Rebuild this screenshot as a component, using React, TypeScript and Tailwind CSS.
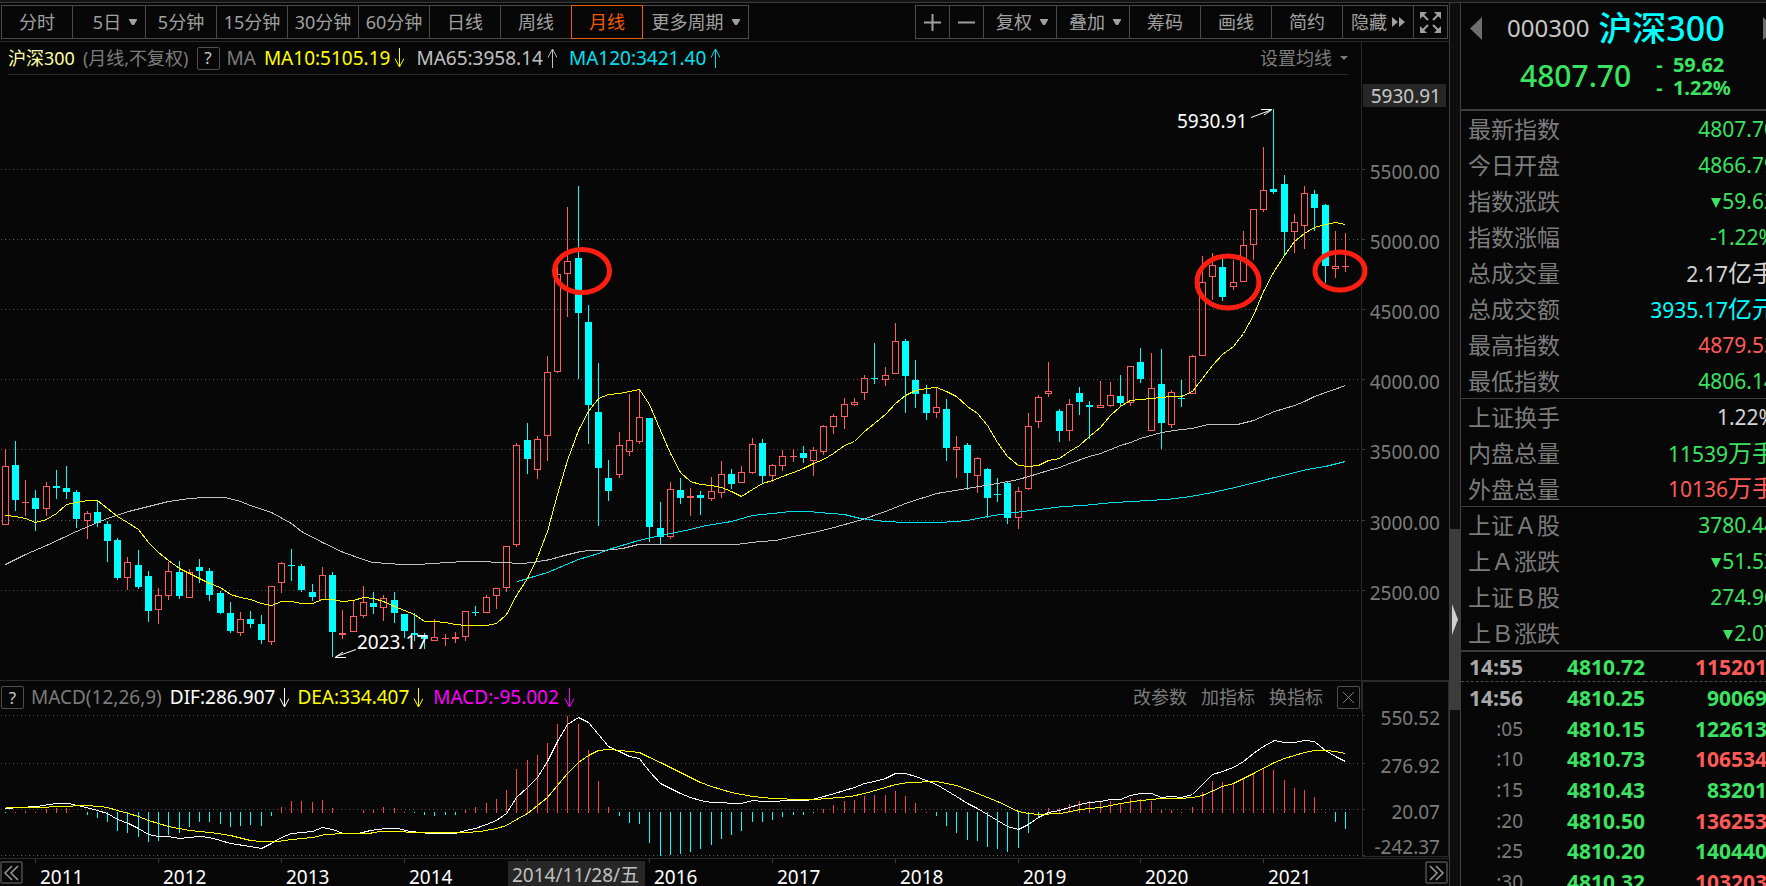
import React from 'react';
import clsx from 'clsx';

type Dir = 'u' | 'd';
type Candle = [Dir, number, number, number, number]; // direction, high, body top, body bottom, low

const RED = '#ff5c5c';
const CYAN = '#00ffff';
const FONT = '"Noto Sans", "Noto Sans CJK SC", sans-serif';

const candles: Candle[] = [
  ['u', 449, 466, 525, 525], ['d', 441, 465, 500, 511], ['u', 480, 502, 503, 516], ['d', 490, 498, 509, 531],
  ['u', 482, 486, 509, 516], ['d', 470, 486, 488, 499], ['d', 466, 488, 492, 499], ['d', 490, 492, 519, 528],
  ['u', 511, 513, 521, 539], ['d', 500, 512, 523, 527], ['d', 521, 524, 541, 562], ['d', 538, 540, 578, 580],
  ['u', 557, 562, 578, 590], ['d', 550, 565, 587, 589], ['d', 571, 576, 611, 622], ['u', 588, 595, 610, 624],
  ['u', 562, 571, 596, 600], ['d', 561, 572, 596, 599], ['u', 569, 572, 598, 598], ['d', 559, 567, 571, 583],
  ['d', 568, 571, 595, 601], ['d', 591, 593, 613, 614], ['d', 602, 613, 631, 633], ['u', 612, 619, 633, 636],
  ['d', 611, 619, 624, 628], ['d', 615, 624, 640, 644], ['u', 586, 586, 642, 645], ['u', 562, 563, 583, 593],
  ['d', 549, 565, 566, 581], ['d', 564, 566, 590, 592], ['d', 584, 592, 597, 601], ['u', 567, 575, 600, 600],
  ['d', 572, 575, 632, 657], ['u', 610, 633, 635, 639], ['u', 600, 616, 632, 632], ['u', 586, 602, 616, 618],
  ['d', 592, 603, 607, 614], ['u', 595, 598, 608, 621], ['d', 592, 600, 613, 623], ['d', 614, 614, 631, 638],
  ['d', 613, 633, 635, 641], ['d', 633, 635, 639, 649], ['u', 619, 637, 641, 641], ['u', 634, 638, 639, 646],
  ['u', 632, 637, 639, 643], ['u', 611, 611, 637, 641], ['d', 606, 612, 613, 616], ['u', 595, 597, 613, 613],
  ['u', 588, 588, 596, 609], ['u', 546, 546, 588, 592], ['u', 443, 445, 545, 547], ['d', 423, 440, 459, 474],
  ['u', 436, 439, 470, 479], ['u', 356, 372, 436, 461], ['u', 267, 274, 372, 373], ['u', 207, 261, 274, 317],
  ['d', 186, 258, 313, 379], ['d', 305, 322, 405, 444], ['d', 363, 412, 468, 526], ['d', 460, 478, 491, 501],
  ['u', 432, 445, 475, 478], ['u', 394, 440, 452, 456], ['u', 390, 417, 442, 444], ['d', 418, 418, 527, 542],
  ['d', 502, 528, 537, 544], ['u', 482, 489, 537, 539], ['d', 478, 490, 498, 504], ['u', 488, 496, 498, 516],
  ['d', 491, 495, 498, 515], ['u', 477, 491, 499, 501], ['u', 461, 474, 493, 498], ['d', 469, 474, 484, 489],
  ['u', 466, 472, 483, 483], ['u', 438, 444, 473, 474], ['d', 439, 443, 476, 483], ['u', 464, 465, 476, 482],
  ['u', 450, 456, 466, 471], ['u', 449, 456, 457, 462], ['d', 446, 453, 458, 463], ['u', 447, 450, 461, 476],
  ['u', 425, 426, 452, 455], ['u', 414, 416, 427, 434], ['u', 398, 404, 417, 429], ['u', 398, 402, 405, 406],
  ['u', 375, 378, 393, 400], ['d', 343, 378, 379, 384], ['u', 367, 375, 380, 386], ['u', 323, 341, 374, 374],
  ['d', 339, 341, 376, 413], ['d', 360, 380, 394, 408], ['d', 385, 394, 413, 420], ['u', 388, 407, 413, 418],
  ['d', 399, 409, 448, 461], ['u', 436, 447, 450, 478], ['d', 443, 445, 473, 490], ['u', 457, 458, 476, 493],
  ['d', 468, 469, 498, 518], ['d', 478, 494, 495, 502], ['d', 482, 483, 518, 524], ['u', 487, 491, 518, 529],
  ['u', 413, 426, 489, 490], ['u', 395, 397, 422, 428], ['u', 362, 391, 394, 397], ['d', 409, 411, 431, 442],
  ['u', 399, 404, 431, 441], ['d', 387, 393, 402, 415], ['d', 401, 405, 407, 439], ['u', 381, 405, 408, 408],
  ['u', 382, 395, 406, 407], ['d', 375, 396, 403, 406], ['u', 366, 366, 403, 406], ['d', 348, 362, 379, 383],
  ['u', 353, 388, 431, 431], ['d', 349, 384, 423, 449], ['u', 390, 392, 425, 428], ['d', 380, 398, 399, 407],
  ['u', 355, 356, 394, 394], ['u', 256, 282, 356, 356], ['u', 253, 265, 277, 300], ['d', 259, 267, 297, 301],
  ['u', 260, 282, 287, 290], ['u', 231, 245, 282, 282], ['u', 209, 209, 245, 260], ['u', 147, 190, 210, 212],
  ['d', 109, 189, 192, 194], ['d', 175, 184, 232, 256], ['u', 214, 222, 232, 253], ['u', 186, 193, 226, 249],
  ['d', 190, 194, 208, 231], ['d', 204, 205, 266, 283], ['u', 231, 266, 269, 278], ['u', 233, 266, 267, 272],
];

// one value per month
const ma10 = [
  515, 516, 518, 522, 519, 513, 504, 502, 500, 500, 508, 516, 522, 529, 542, 552, 560, 568, 573, 578,
  583, 587, 594, 597, 599, 603, 605, 601, 601, 603, 603, 599, 599, 601, 600, 597, 598, 601, 606, 610,
  614, 621, 621, 622, 624, 625, 625, 625, 623, 614, 595, 578, 557, 531, 494, 460, 430, 411, 398, 394,
  393, 391, 389, 404, 430, 453, 472, 481, 484, 485, 487, 491, 496, 489, 483, 480, 476, 472, 468, 463,
  459, 453, 445, 441, 431, 423, 414, 403, 395, 390, 388, 387, 391, 396, 406, 413, 425, 442, 456, 465,
  466, 465, 460, 458, 451, 445, 436, 427, 415, 406, 400, 399, 398, 397, 396, 396, 391, 378, 365, 354,
  346, 333, 315, 291, 272, 255, 241, 233, 227, 224, 222, 224,
];

const ma65 =
  '5,564 25,554 46,545 76,531 97,522 107,518 128,511 148,506 168,501 189,498 204,497 225,497 240,501 250,505 271,512 291,523 301,531 322,542 343,552 360,558 372,562 389,563 400,564 420,564 430,563 450,562 462,561 480,561 500,562 522,563 532,562 550,559 560,556 580,551 590,550 603,550 622,548 638,544 735,544 760,541 775,540 793,536 813,532 830,528 862,519 885,511 905,503 936,493 967,488 997,483 1018,479 1048,470 1059,467 1069,463 1089,456 1100,453 1120,445 1130,442 1140,438 1161,432 1181,429 1192,428 1207,424 1237,424 1253,420 1274,411 1294,405 1304,401 1314,396 1345,385';

const ma120 =
  '517,581 547,572 578,559 598,553 608,549 638,540 660,535 690,529 701,526 731,521 752,515 772,513 790,511 808,511 830,513 844,514 860,518 885,521 905,522 940,522 967,520 987,516 1007,513 1038,509 1063,506 1083,505 1113,502 1133,501 1147,500 1167,499 1190,496 1212,492 1239,486 1270,478 1307,469 1325,466 1345,461';

// positive bars rise above the zero line, negative ones hang below it
const macdBars = [
  -1, 1, 2, 1, 4, 5, 5, 0, -3, -6, -10, -19, -21, -25, -30, -29, -23, -21, -15, -10,
  -10, -12, -15, -14, -13, -14, -4, 6, 12, 12, 11, 13, 5, 0, 0, 3, 3, 6, 5, 1,
  -1, -3, -4, -3, -3, 3, 6, 10, 14, 23, 44, 53, 58, 70, 89, 97, 89, 63, 32, 6,
  -4, -11, -12, -31, -44, -43, -42, -40, -37, -33, -27, -23, -19, -10, -10, -8, -5, -3, -3, -1,
  4, 8, 12, 13, 17, 18, 18, 22, 17, 10, 1, -4, -14, -21, -28, -29, -35, -37, -40, -36,
  -21, -5, 5, 5, 9, 12, 12, 11, 12, 10, 15, 14, 12, 3, 3, 1, 6, 21, 32, 31,
  30, 35, 40, 44, 43, 33, 25, 23, 16, 1, -10, -17,
];

const dif =
  '5,808 20,807 36,806 56,803 68,803 86,807 97,810 107,813 117,819 128,823 138,828 148,834 158,836 168,836 179,838 199,836 209,837 220,840 230,843 250,846 261,848 271,843 281,837 291,833 312,831 322,827 332,829 343,833 358,833 370,830 385,828 397,828 410,831 430,833 455,833 465,830 475,828 486,824 496,820 506,813 516,797 527,787 537,777 547,761 557,741 567,724 578,717 588,722 598,734 608,746 619,751 629,756 639,758 649,771 660,783 670,788 680,793 690,797 700,800 711,802 741,803 752,800 762,801 776,801 783,800 806,800 816,798 834,793 854,787 864,783 874,781 885,778 895,773 905,773 915,776 926,780 936,784 946,790 956,796 967,803 977,808 987,814 997,820 1007,826 1018,829 1028,824 1038,817 1048,812 1059,810 1069,807 1079,804 1089,802 1100,801 1110,799 1120,799 1130,795 1140,793 1151,793 1161,797 1171,796 1181,797 1192,794 1202,784 1212,774 1222,771 1233,767 1243,761 1253,753 1263,746 1274,740 1284,742 1294,742 1304,740 1314,741 1325,750 1335,756 1345,761';

const dea =
  '5,807 38,807 60,806 85,805 100,806 107,807 117,810 128,813 138,816 148,820 168,826 189,830 210,832 230,835 250,840 261,841 277,841 291,839 312,837 325,834 345,833 368,833 380,831 430,832 465,832 480,831 496,828 506,825 516,819 527,813 537,805 547,797 557,785 567,773 578,762 588,755 598,750 608,749 620,750 639,752 649,757 660,762 680,772 700,782 711,786 731,792 752,796 772,798 800,799 815,799 850,796 864,793 885,787 895,784 908,782 936,781 956,785 967,789 977,793 997,801 1018,811 1028,813 1038,814 1060,813 1080,809 1100,807 1120,803 1140,800 1161,798 1180,798 1192,797 1202,795 1222,786 1233,783 1253,773 1274,762 1284,758 1304,752 1314,750 1325,750 1335,751 1345,753';

const xAt = (i: number) => Math.floor(5.2 + i * 10.232);

const priceGrid = [
  { y: 169, label: '5500.00' },
  { y: 239, label: '5000.00' },
  { y: 309, label: '4500.00' },
  { y: 379, label: '4000.00' },
  { y: 449, label: '3500.00' },
  { y: 520, label: '3000.00' },
  { y: 590, label: '2500.00' },
];

const macdGrid = [
  { y: 715, labelY: 725, label: '550.52' },
  { y: 763, labelY: 773, label: '276.92' },
  { y: 809, labelY: 819, label: '20.07' },
  { y: 855, labelY: 854, label: '-242.37' },
];

const years = [
  { x: 35, label: '2011' },
  { x: 158, label: '2012' },
  { x: 281, label: '2013' },
  { x: 404, label: '2014' },
  { x: 527, label: '' },
  { x: 649, label: '2016' },
  { x: 772, label: '2017' },
  { x: 895, label: '2018' },
  { x: 1018, label: '2019' },
  { x: 1140, label: '2020' },
  { x: 1263, label: '2021' },
];

interface Quote {
  label: string;
  value: string;
  unit?: string;
  color: string;
  down?: boolean;
}

const GREEN_TEXT = 'text-[#3ce262]';
const RED_TEXT = 'text-[#ff5a58]';
const PLAIN_TEXT = 'text-[#d4d4d4]';

const quoteGroups: Quote[][] = [
  [
    { label: '最新指数', value: '4807.70', color: GREEN_TEXT },
    { label: '今日开盘', value: '4866.79', color: GREEN_TEXT },
    { label: '指数涨跌', value: '59.62', color: GREEN_TEXT, down: true },
    { label: '指数涨幅', value: '-1.22%', color: GREEN_TEXT },
    { label: '总成交量', value: '2.17', unit: '亿手', color: PLAIN_TEXT },
    { label: '总成交额', value: '3935.17', unit: '亿元', color: 'text-[#00ffff]' },
    { label: '最高指数', value: '4879.53', color: RED_TEXT },
    { label: '最低指数', value: '4806.14', color: GREEN_TEXT },
  ],
  [
    { label: '上证换手', value: '1.22%', color: PLAIN_TEXT },
    { label: '内盘总量', value: '11539', unit: '万手', color: GREEN_TEXT },
    { label: '外盘总量', value: '10136', unit: '万手', color: RED_TEXT },
  ],
  [
    { label: '上证Ａ股', value: '3780.44', color: GREEN_TEXT },
    { label: '上Ａ涨跌', value: '51.53', color: GREEN_TEXT, down: true },
    { label: '上证Ｂ股', value: '274.96', color: GREEN_TEXT },
    { label: '上Ｂ涨跌', value: '2.07', color: GREEN_TEXT, down: true },
  ],
];

const ticks = [
  { time: '14:55', price: '4810.72', volume: '115201', up: true },
  { time: '14:56', price: '4810.25', volume: '90069', up: false },
  { time: ':05', price: '4810.15', volume: '122613', up: false },
  { time: ':10', price: '4810.73', volume: '106534', up: true },
  { time: ':15', price: '4810.43', volume: '83201', up: false },
  { time: ':20', price: '4810.50', volume: '136253', up: true },
  { time: ':25', price: '4810.20', volume: '140440', up: false },
  { time: ':30', price: '4810.32', volume: '103203', up: true },
];

const Caret = () => (
  <svg width="8" height="6" viewBox="0 0 8 6" fill="currentColor" className="shrink-0">
    <path d="M0 0H8V1L5 6H3L0 1Z" />
  </svg>
);

const TrendArrow = ({ up = false }: { up?: boolean }) => (
  <svg width="10" height="20" viewBox="0 0 10 20" fill="none" stroke="currentColor" className="shrink-0">
    <path d={up ? 'M5.5 20V1M1 9.5L5.5 1L10 9.5' : 'M5.5 0V19M1 10.5L5.5 19L10 10.5'} />
  </svg>
);

const ToolButton = ({
  children,
  width,
  active = false,
  label,
}: {
  children: React.ReactNode;
  width: string;
  active?: boolean;
  label?: string;
}) => (
  <button
    type="button"
    aria-label={label}
    className={clsx(
      '-ml-px flex h-[34px] shrink-0 items-center justify-center gap-2 whitespace-nowrap border text-[18px]',
      width,
      active ? 'relative z-10 border-[#f05a00] text-[#f05a00]' : 'border-[#4a4a4a] text-[#a0a0a0]'
    )}
  >
    {children}
  </button>
);

const HelpButton = () => (
  <button
    type="button"
    className="flex size-[23px] shrink-0 items-center justify-center rounded-xs border border-[#4f4f4f] text-[17px] text-[#c8c8c8]"
  >
    ?
  </button>
);

const Toolbar = () => (
  <div className="flex h-[39px] justify-between border-b border-[#2a2a2a] pt-[2px] pr-px pl-[2px]">
    <div className="flex">
      <ToolButton width="w-[72px]">分时</ToolButton>
      <ToolButton width="w-[74px] pl-3">5日 <Caret /></ToolButton>
      <ToolButton width="w-[72px]">5分钟</ToolButton>
      <ToolButton width="w-[72px]">15分钟</ToolButton>
      <ToolButton width="w-[72px]">30分钟</ToolButton>
      <ToolButton width="w-[72px]">60分钟</ToolButton>
      <ToolButton width="w-[72px]">日线</ToolButton>
      <ToolButton width="w-[72px]">周线</ToolButton>
      <ToolButton width="w-[72px]" active>月线</ToolButton>
      <ToolButton width="w-[107px]">更多周期 <Caret /></ToolButton>
    </div>
    <div className="flex">
      <ToolButton width="w-[35px]" label="放大">
        <svg width="17" height="17" viewBox="0 0 17 17" fill="none" stroke="currentColor" strokeWidth="2">
          <path d="M8.5 0V17M0 8.5H17" />
        </svg>
      </ToolButton>
      <ToolButton width="w-[35px]" label="缩小">
        <svg width="17" height="17" viewBox="0 0 17 17" fill="none" stroke="currentColor" strokeWidth="2">
          <path d="M0 8.5H17" />
        </svg>
      </ToolButton>
      <ToolButton width="w-[74px] pl-1">复权 <Caret /></ToolButton>
      <ToolButton width="w-[74px] pl-1">叠加 <Caret /></ToolButton>
      <ToolButton width="w-[72px]">筹码</ToolButton>
      <ToolButton width="w-[72px]">画线</ToolButton>
      <ToolButton width="w-[72px]">简约</ToolButton>
      <ToolButton width="w-[72px] gap-[5px]">
        隐藏
        <svg width="13" height="10" viewBox="0 0 13 10" fill="currentColor">
          <path d="M0 0L6 5L0 10ZM7 0L13 5L7 10Z" />
        </svg>
      </ToolButton>
      <ToolButton width="w-[35px]" label="全屏">
        <svg width="21" height="21" viewBox="0 0 21 21" fill="currentColor" stroke="currentColor" strokeWidth="2" className="shrink-0">
          <path d="M2 2L8 8M19 2L13 8M2 19L8 13M19 19L13 13" />
          <path stroke="none" d="M0 0H7L5 2L2 5L0 7ZM21 0H14L16 2L19 5L21 7ZM0 21H7L5 19L2 16L0 14ZM21 21H14L16 19L19 16L21 14Z" />
        </svg>
      </ToolButton>
    </div>
  </div>
);

const PriceLegend = () => (
  <div className="flex h-[33px]">
    <div className="ml-2 mr-[13px] flex flex-1 items-center border-b border-[#2a2a2a] text-[19px] whitespace-nowrap">
      <span className="text-[18px] text-[#ffffa8]">沪深300</span>
      <span className="mx-2 text-[18px] text-[#7c7c7c]">(月线,不复权)</span>
      <HelpButton />
      <span className="ml-[7px] text-[#7c7c7c]">MA</span>
      <span className="ml-2 mr-1 text-[#ffff00]">MA10:5105.19</span>
      <span className="text-[#ffff00]"><TrendArrow /></span>
      <span className="ml-3 mr-1 text-[#c0c0c0]">MA65:3958.14</span>
      <span className="text-[#c0c0c0]"><TrendArrow up /></span>
      <span className="ml-3 mr-1 text-[#00e1f0]">MA120:3421.40</span>
      <span className="text-[#00e1f0]"><TrendArrow up /></span>
      <button type="button" className="ml-auto flex items-center gap-2 text-[18px] text-[#7c7c7c]">
        设置均线
        <svg width="8" height="4" viewBox="0 0 8 4" fill="currentColor">
          <path d="M0 0H8L4 4Z" />
        </svg>
      </button>
    </div>
    <div className="w-[88px] border-l border-[#2a2a2a]" />
  </div>
);

const CandleShape = ({ candle, x }: { candle: Candle; x: number }) => {
  const [dir, high, top, bottom, low] = candle;
  if (dir === 'd') {
    return (
      <g fill={CYAN}>
        <rect x={x} y={high} width="1" height={low - high} />
        <rect x={x - 3} y={top} width="7" height={bottom - top} />
      </g>
    );
  }
  return (
    <g fill={RED}>
      <rect x={x} y={high} width="1" height={top - high} />
      <rect x={x} y={bottom} width="1" height={low - bottom} />
      {bottom - top > 2 ? (
        <rect x={x - 2.5} y={top + 0.5} width="6" height={bottom - top - 1} fill="none" stroke={RED} />
      ) : (
        <rect x={x - 3} y={top} width="7" height={bottom - top} />
      )}
    </g>
  );
};

const GridLine = ({ y }: { y: number }) => (
  <>
    <line x1="1" x2="1361" y1={y + 0.5} y2={y + 0.5} stroke="#585858" strokeDasharray="1 3" />
    <line x1="1362" x2="1365" y1={y + 0.5} y2={y + 0.5} stroke="#3a3a3a" />
  </>
);

const PriceChart = () => (
  <svg viewBox="0 75 1449 605" className="block h-auto w-full" fontFamily={FONT} fontSize="19">
    <g shapeRendering="crispEdges" fill="none">
      {priceGrid.map((g) => <GridLine key={g.y} y={g.y} />)}
      <line x1="1361.5" x2="1361.5" y1="75" y2="680" stroke="#2a2a2a" />
      {candles.map((c, i) => <CandleShape key={i} candle={c} x={xAt(i)} />)}
      <g transform="translate(.5 .5)">
        <polyline points={ma65} stroke="#c0c0c0" />
        <polyline points={ma120} stroke="#00e1f0" />
        <polyline points={ma10.map((y, i) => `${xAt(i)},${y}`).join(' ')} stroke="#ffff00" />
      </g>
    </g>

    {/* High and low marks */}
    <g stroke="#ffffff" fill="none">
      <path d="M1251 117.5L1271 110M1261 109.5H1272M1272 109.5L1264 115" />
      <path d="M356 649.5L336 656.5M346 657.5H335M335 657.5L343 652" />
    </g>
    <g fill="#ffffff">
      <text x="1177" y="128">5930.91</text>
      <text x="357" y="649">2023.17</text>
    </g>

    <g stroke="#ff1e10" strokeWidth="5" fill="none">
      <ellipse cx="582" cy="271" rx="27.5" ry="21.5" />
      <ellipse cx="1228" cy="282" rx="31" ry="26" />
      <ellipse cx="1340" cy="271" rx="25" ry="19" />
    </g>

    {/* Price axis */}
    <rect x="1363" y="84" width="83" height="23" rx="1" fill="#272727" />
    <text x="1441" y="103" textAnchor="end" fill="#c8c8c8">5930.91</text>
    <g fill="#7c7c7c" textAnchor="end">
      {priceGrid.map((g) => <text key={g.y} x="1440" y={g.y + 10}>{g.label}</text>)}
    </g>
  </svg>
);

const MacdHeader = () => (
  <div className="flex h-[31px] border-t border-[#2a2a2a]">
    <div className="flex flex-1 items-center pt-[3px] pr-px pl-px text-[19px] whitespace-nowrap">
      <HelpButton />
      <span className="ml-[7px] text-[#7c7c7c]">MACD(12,26,9)</span>
      <span className="ml-2 mr-1 text-white">DIF:286.907</span>
      <span className="text-white"><TrendArrow /></span>
      <span className="ml-2 mr-1 text-[#ffff00]">DEA:334.407</span>
      <span className="text-[#ffff00]"><TrendArrow /></span>
      <span className="ml-[10px] mr-[5px] text-[#ff00ff]">MACD:-95.002</span>
      <span className="text-[#ff00ff]"><TrendArrow /></span>
      <div className="ml-auto flex items-center gap-[14px] text-[18px] text-[#7c7c7c]">
        <button type="button">改参数</button>
        <button type="button">加指标</button>
        <button type="button">换指标</button>
        <button
          type="button"
          aria-label="关闭"
          className="flex size-[23px] items-center justify-center rounded-xs border border-[#4f4f4f]"
        >
          <svg width="13" height="13" viewBox="0 0 13 13" fill="none" stroke="currentColor">
            <path d="M1 1L12 12M12 1L1 12" />
          </svg>
        </button>
      </div>
    </div>
    <div className="w-[88px] border-t border-r border-l-2 border-[#2a2a2a]" />
  </div>
);

const MacdChart = () => (
  <svg viewBox="0 711 1449 147" className="block h-auto w-full" fontFamily={FONT} fontSize="19">
    <g shapeRendering="crispEdges" fill="none">
      {macdGrid.map((g) => <GridLine key={g.y} y={g.y} />)}
      <path d="M1362 711V856.5H1448.5V711" stroke="#2a2a2a" />
      {macdBars.map((h, i) =>
        h > 0 ? (
          <rect key={i} x={xAt(i)} y={813 - h} width="1" height={h} fill="#ff4040" />
        ) : (
          <rect key={i} x={xAt(i)} y={812} width="1" height={-h} fill={CYAN} />
        )
      )}
      <g transform="translate(.5 .5)">
        <polyline points={dif} stroke="#ffffff" />
        <polyline points={dea} stroke="#ffff00" />
      </g>
    </g>
    <g fill="#7c7c7c" textAnchor="end">
      {macdGrid.map((g) => <text key={g.y} x="1440" y={g.labelY}>{g.label}</text>)}
    </g>
  </svg>
);

const ScrollButton = ({ label, d }: { label: string; d: string }) => (
  <button
    type="button"
    aria-label={label}
    className="mt-[2px] flex size-[23px] shrink-0 items-center justify-center rounded-xs border-2 border-[#3c3c3c]"
  >
    <svg width="15" height="16" viewBox="0 0 15 16" fill="none" stroke="#9a9a9a" strokeWidth="1.5" className="shrink-0">
      <path d={d} />
    </svg>
  </button>
);

const TimeAxis = () => (
  <div className="flex items-start border-t border-[#2a2a2a] pr-px">
    <ScrollButton label="向左" d="M8 1L1 8L8 15M14 1L7 8L14 15" />
    <svg viewBox="23 859 1402 27" className="block h-auto min-w-0 flex-1" fontFamily={FONT} fontSize="19">
      {years.map((y) => (
        <g key={y.x}>
          <line x1={y.x + 0.5} x2={y.x + 0.5} y1="859" y2="863" stroke="#3a3a3a" />
          {y.label && <text x={y.x + 5} y="884" fill="#ffffff">{y.label}</text>}
        </g>
      ))}
      <rect x="508" y="861" width="137" height="25" rx="1" fill="#272727" />
      <text x="512" y="882" fill="#c0c0c0">2014/11/28/五</text>
    </svg>
    <ScrollButton label="向右" d="M1 1L8 8L1 15M7 1L14 8L7 15" />
  </div>
);

const Divider = () => (
  <div className="flex w-[11px] shrink-0 flex-col border-l border-[#3c3c3c] bg-[#0e0e0e] pt-[526px]">
    <button type="button" aria-label="收起" className="flex h-[181px] items-start bg-[#3c3c3c] pt-[75px] pl-[2px]">
      <svg width="6" height="31" viewBox="0 0 6 31" fill="#d0d0d0">
        <path d="M0 0L6 15.5L0 31Z" />
      </svg>
    </button>
  </div>
);

const QuotePanel = () => (
  <aside className="w-[306px] shrink-0 overflow-hidden border-l border-[#3c3c3c]">
    <div className="w-[315px]">
      <div className="h-[108px] border-b-2 border-[#3c3c3c]">
        <div className="flex h-[50px] items-center pl-[9px]">
          <button type="button" aria-label="上一个">
            <svg width="12" height="23" viewBox="0 0 12 23" fill="#6e6e6e">
              <path d="M12 0V23L0 11.5Z" />
            </svg>
          </button>
          <span className="ml-[25px] text-[24px] text-[#c8c8c8]">000300</span>
          <h1 className="ml-[9px] text-[34px] leading-[48px] font-medium text-[#00ffff]">沪深300</h1>
          <button type="button" aria-label="下一个" className="ml-auto mr-px">
            <svg width="12" height="23" viewBox="0 0 12 23" fill="#6e6e6e">
              <path d="M0 0V23L12 11.5Z" />
            </svg>
          </button>
        </div>
        <div className="flex h-[46px] items-center pl-[59px] text-[#3ce262]">
          <span className="text-[30px] leading-[46px] font-medium">4807.70</span>
          <div className="ml-[25px] text-[20px] leading-[23px] font-bold whitespace-pre">
            <p>-  59.62</p>
            <p>-  1.22%</p>
          </div>
        </div>
      </div>

      <table className="w-full border-separate border-spacing-0">
        {quoteGroups.map((group, gi) => (
          <tbody key={gi}>
            {group.map((q, i) => {
              const last = i === group.length - 1;
              const line = last ? (gi === 2 ? 'h-[37px] border-b-2' : 'h-9 border-b') : 'h-9';
              return (
                <tr key={q.label}>
                  <th
                    scope="row"
                    className={clsx('border-[#3c3c3c] p-0 pl-[7px] text-left text-[23px] leading-[34px] font-normal text-[#7c7c7c]', line)}
                  >
                    {q.label}
                  </th>
                  <td className={clsx('border-[#3c3c3c] p-0 text-right text-[21px] leading-[34px]', q.color, line)}>
                    {q.down && (
                      <svg width="10" height="10" viewBox="0 0 10 10" fill="currentColor" className="mr-px mb-px inline-block align-baseline">
                        <path d="M0 0H10L5 10Z" />
                      </svg>
                    )}
                    {q.value}
                    {q.unit && <span className="text-[24px]">{q.unit}</span>}
                  </td>
                </tr>
              );
            })}
          </tbody>
        ))}
      </table>

      <table className="w-[306px] border-separate border-spacing-0 text-[21px] leading-[28px] font-bold">
        <tbody>
          {ticks.map((t, i) => {
            const line = i === 0 && 'border-b border-dashed';
            return (
              <tr key={t.time} className={i % 3 === 0 ? 'h-[30px]' : 'h-[31px]'}>
                <td
                  className={clsx(
                    'w-[62px] border-[#4a4a4a] p-0 text-right',
                    t.time.startsWith(':') ? 'text-[19px] font-normal text-[#7c7c7c]' : 'text-[#a8a8a8]',
                    line
                  )}
                >
                  {t.time}
                </td>
                <td className={clsx('w-[122px] border-[#4a4a4a] p-0 text-right', GREEN_TEXT, line)}>{t.price}</td>
                <td className={clsx('border-[#4a4a4a] p-0 text-right', t.up ? RED_TEXT : GREEN_TEXT, line)}>
                  {t.volume}
                </td>
              </tr>
            );
          })}
        </tbody>
      </table>
    </div>
  </aside>
);

const App = () => {
  return (
    <div className="flex h-screen flex-col overflow-hidden bg-[#070707] font-['Noto_Sans','Noto_Sans_CJK_SC',sans-serif]">
      <div className="h-[3px] shrink-0 border-b border-[#3c3c3c] bg-[#141414]" />
      <div className="flex min-h-0 flex-1">
        <main className="min-w-0 flex-1">
          <Toolbar />
          <PriceLegend />
          <PriceChart />
          <MacdHeader />
          <MacdChart />
          <TimeAxis />
        </main>
        <Divider />
        <QuotePanel />
      </div>
    </div>
  );
};

export default App;
